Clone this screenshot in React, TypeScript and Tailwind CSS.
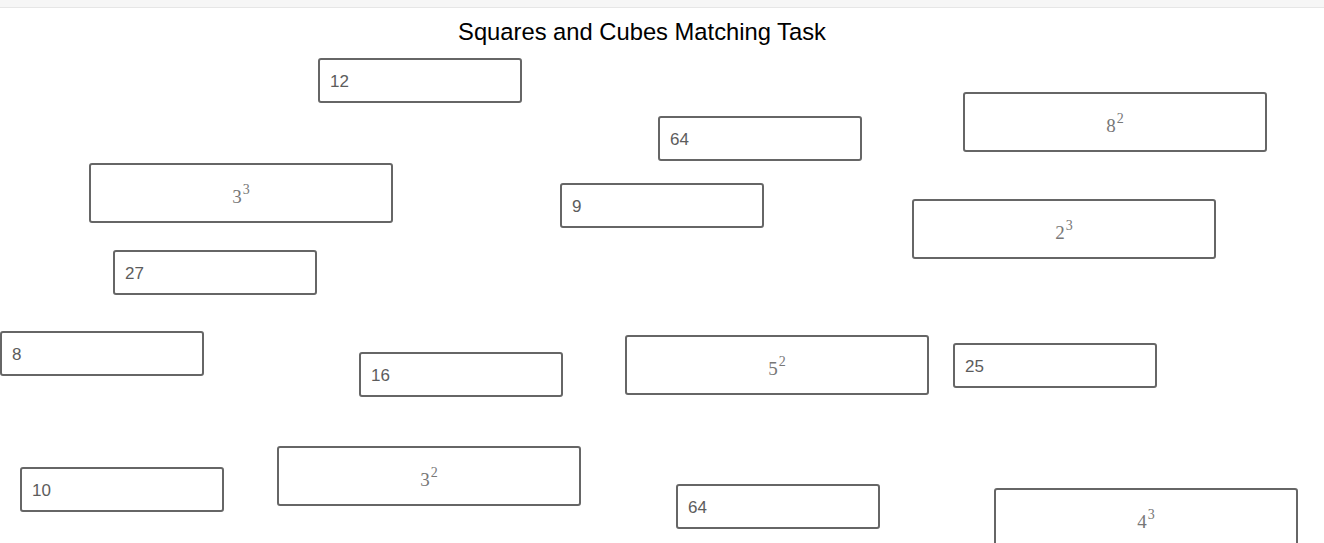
type Card = {
  id: string
  x: number
  y: number
  label?: string
  base?: string
  exp?: string
}

const numbers: Card[] = [
  { id: "n1", x: 318, y: 58, label: "12" },
  { id: "n2", x: 658, y: 116, label: "64" },
  { id: "n3", x: 560, y: 183, label: "9" },
  { id: "n4", x: 113, y: 250, label: "27" },
  { id: "n5", x: 0, y: 331, label: "8" },
  { id: "n6", x: 359, y: 352, label: "16" },
  { id: "n7", x: 953, y: 343, label: "25" },
  { id: "n8", x: 20, y: 467, label: "10" },
  { id: "n9", x: 676, y: 484, label: "64" },
]

const powers: Card[] = [
  { id: "p1", x: 963, y: 92, base: "8", exp: "2" },
  { id: "p2", x: 89, y: 163, base: "3", exp: "3" },
  { id: "p3", x: 912, y: 199, base: "2", exp: "3" },
  { id: "p4", x: 625, y: 335, base: "5", exp: "2" },
  { id: "p5", x: 277, y: 446, base: "3", exp: "2" },
  { id: "p6", x: 994, y: 488, base: "4", exp: "3" },
]

export default function App() {
  return (
    <div className="relative h-[543px] w-full overflow-hidden bg-white font-['Liberation_Sans',Arial,sans-serif]">
      <div className="h-[8px] border-b border-[#e6e6e6] bg-[#f6f6f6]" />
      <h1 className="mt-[9px] pr-[40px] text-center text-[23.75px] leading-[30px] text-black">
        Squares and Cubes Matching Task
      </h1>

      {numbers.map((c) => (
        <div
          key={c.id}
          className="absolute flex h-[45px] w-[204px] items-center rounded-[3px] border-2 border-[#666666] bg-white px-[10px] pt-[2px] text-[17px] text-[#5c5c5c]"
          style={{ left: c.x, top: c.y }}
        >
          {c.label}
        </div>
      ))}

      {powers.map((c) => (
        <div
          key={c.id}
          className="absolute flex h-[60px] w-[304px] items-center justify-center rounded-[3px] border-2 border-[#666666] bg-white pt-[8px] font-['Liberation_Serif','DejaVu_Serif',serif] text-[19px] text-[#777777]"
          style={{ left: c.x, top: c.y }}
        >
          <span>
            {c.base}
            <sup className="relative top-[-0.6em] ml-[1px] text-[14px]">{c.exp}</sup>
          </span>
        </div>
      ))}
    </div>
  )
}
